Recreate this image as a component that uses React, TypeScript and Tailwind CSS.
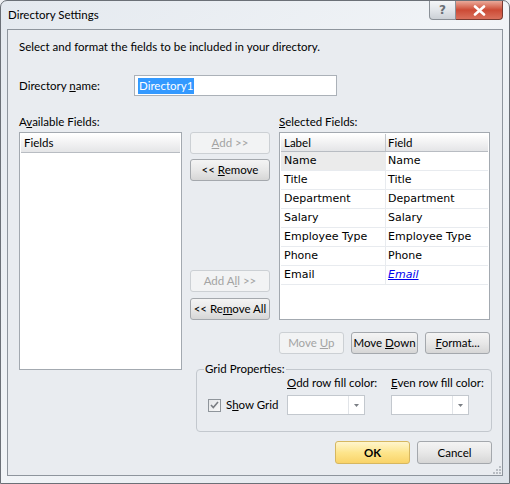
import React from "react";

const ui = { fontFamily: "Lato, 'Open Sans', sans-serif" };
const cell = { fontFamily: "'DejaVu Sans', Verdana, sans-serif" };

const Btn = ({ children, disabled, className = "" }: { children: React.ReactNode; disabled?: boolean; className?: string }) => (
  <button
    type="button"
    className={
      "h-[22px] rounded-[3px] border text-[11.5px] leading-none " +
      (disabled
        ? "border-[#ccd0d4] bg-[#f2f3f4] text-[#a3a3a3] "
        : "border-[#a4a8ad] bg-gradient-to-b from-[#f4f4f4] via-[#e8e8e8] to-[#d6d6d6] text-black ") +
      className
    }
  >
    {children}
  </button>
);

const rows = ["Name", "Title", "Department", "Salary", "Employee Type", "Phone", "Email"];

const Combo = () => (
  <div className="flex h-[20px] w-[78px] border border-[#c3c8ce] bg-white">
    <div className="flex-1" />
    <div className="flex w-[16px] items-center justify-center border-l border-[#e1e4e8]">
      <svg width="5" height="3" viewBox="0 0 5 3">
        <path d="M0 0h5L2.5 3z" fill="#7a7e84" />
      </svg>
    </div>
  </div>
);

export default function App() {
  return (
    <div className="h-[484px] w-[510px] overflow-hidden bg-[#eef0f3]" style={ui}>
      <div className="flex h-[484px] w-[510px] flex-col rounded-t-[7px] border border-[#6b7077] bg-gradient-to-br from-[#e4e9ef] via-[#f1f4f7] to-[#dde3ea]">
        {/* title bar */}
        <div className="flex h-[28px] shrink-0 items-start">
          <span className="ml-[7px] mt-[6px] text-[11.5px] leading-[16px] text-black">Directory Settings</span>
          <div className="ml-auto mr-[6px] flex">
            <div className="flex h-[19px] w-[27px] items-center justify-center rounded-bl-[4px] border border-t-0 border-[#8a9097] bg-gradient-to-b from-[#f4f6f8] via-[#e2e6ea] to-[#cbd0d6]">
              <span className="text-[12px] font-bold leading-none text-[#6a6f75]" style={{ fontFamily: "'DejaVu Sans', sans-serif" }}>?</span>
            </div>
            <div className="flex h-[19px] w-[47px] items-center justify-center rounded-br-[4px] border border-l-0 border-t-0 border-[#7a3a30] bg-gradient-to-b from-[#e9a99a] via-[#cc4a35] to-[#d9705c]">
              <svg width="13" height="11" viewBox="0 0 13 11">
                <path d="M2 1.5l9 8M11 1.5l-9 8" stroke="#fff" strokeWidth="2.6" strokeLinecap="round" />
              </svg>
            </div>
          </div>
        </div>

        {/* client area */}
        <div className="mx-[6px] mb-[7px] flex flex-1 flex-col border border-[#8e959d] bg-[#e9ecf0] pl-[11px] pr-[10px] pt-[9px] text-[11.5px] leading-[16px] text-black">
          <p>Select and format the fields to be included in your directory.</p>

          <div className="mt-[20px] flex items-center">
            <label className="w-[115px]">
              Directory <span className="underline">n</span>ame:
            </label>
            <div className="flex h-[21px] w-[203px] items-center border border-[#abb1b8] bg-white pl-[3px]">
              <span className="bg-[#3399ff] px-[1px] text-white">Directory1</span>
            </div>
          </div>

          <div className="mt-[18px] flex">
            {/* available fields */}
            <div className="w-[164px]">
              <div className="mb-[2px]">
                A<span className="underline">v</span>ailable Fields:
              </div>
              <div className="h-[238px] border border-[#a3a9b0] bg-white p-[1px]">
                <div className="flex h-[19px] items-center border-b border-[#b8bcc2] bg-gradient-to-b from-[#ffffff] via-[#f2f2f3] to-[#e4e5e7] pl-[3px]">
                  Fields
                </div>
              </div>
            </div>

            <div className="ml-[8px] flex flex-col">
              <div className="flex">
                {/* move buttons */}
                <div className="mt-[18px] flex w-[80px] flex-col">
                  <Btn disabled>
                    <span className="underline">A</span>dd &gt;&gt;
                  </Btn>
                  <Btn className="mt-[5px]">
                    &lt;&lt; <span className="underline">R</span>emove
                  </Btn>
                  <Btn disabled className="mt-[89px]">
                    Add A<span className="underline">l</span>l &gt;&gt;
                  </Btn>
                  <Btn className="mt-[6px]">
                    &lt;&lt; Re<span className="underline">m</span>ove All
                  </Btn>
                </div>

                {/* selected fields */}
                <div className="ml-[9px] flex w-[211px] flex-col">
                  <div className="mb-[2px]">
                    <span className="underline">S</span>elected Fields:
                  </div>
                  <div className="h-[188px] border border-[#a3a9b0] bg-white p-[1px]">
                    <div className="grid h-[18px] grid-cols-[105px_1fr] border-b border-[#b8bcc2] bg-gradient-to-b from-[#ffffff] via-[#f2f2f3] to-[#e4e5e7]">
                      <div className="flex items-center border-r border-[#c2c5ca] pl-[3px]">Label</div>
                      <div className="flex items-center pl-[2px]">Field</div>
                    </div>
                    {rows.map((r, i) => (
                      <div key={r} className="grid h-[19px] grid-cols-[105px_1fr] border-b border-[#e8ebef] text-[11px]" style={cell}>
                        <div className={"flex items-center border-r border-[#e8ebef] pl-[3px] " + (i === 0 ? "bg-[#ebebeb]" : "")}>{r}</div>
                        <div className="flex items-center pl-[2px]">
                          {r === "Email" ? <span className="italic text-[#0000ee] underline">Email</span> : r}
                        </div>
                      </div>
                    ))}
                  </div>
                  <div className="mt-[12px] flex gap-[7px]">
                    <Btn disabled className="w-[65px]">
                      Move <span className="underline">U</span>p
                    </Btn>
                    <Btn className="w-[68px]">
                      Move <span className="underline">D</span>own
                    </Btn>
                    <Btn className="w-[65px]">
                      <span className="underline">F</span>ormat...
                    </Btn>
                  </div>
                </div>
              </div>

              {/* grid properties */}
              <fieldset className="ml-[6px] mt-[8px] h-[70px] w-[294px] rounded-[4px] border border-[#c3c8ce] pl-[11px]">
                <legend className="ml-[-4px] px-[1px] leading-[14px]">Grid Properties:</legend>
                <div className="flex items-end">
                  <div className="mb-[2px] flex w-[79px] items-center">
                    <div className="flex h-[13px] w-[13px] items-center justify-center border border-[#8f959b] bg-gradient-to-br from-[#e4e6e8] to-[#f8f8f8]">
                      <svg width="9" height="8" viewBox="0 0 9 8">
                        <path d="M1 4l2.3 2.5L8 1" stroke="#7a7d82" strokeWidth="1.6" fill="none" />
                      </svg>
                    </div>
                    <span className="ml-[5px]">
                      S<span className="underline">h</span>ow Grid
                    </span>
                  </div>
                  <div className="flex w-[104px] flex-col">
                    <span className="mb-[5px] whitespace-nowrap leading-[14px]">
                      <span className="underline">O</span>dd row fill color:
                    </span>
                    <Combo />
                  </div>
                  <div className="flex w-[100px] flex-col">
                    <span className="mb-[5px] whitespace-nowrap leading-[14px]">
                      <span className="underline">E</span>ven row fill color:
                    </span>
                    <Combo />
                  </div>
                </div>
              </fieldset>
            </div>
          </div>

          <div className="mt-[9px] flex justify-end gap-[7px]">
            <button
              type="button"
              className="h-[23px] w-[75px] rounded-[3px] border border-[#d6b760] bg-gradient-to-b from-[#fff5cc] via-[#fde58c] to-[#f9d368] text-[11.5px] font-bold leading-none text-black"
            >
              OK
            </button>
            <Btn className="h-[23px] w-[75px]">Cancel</Btn>
          </div>
          <div className="mr-[-9px] mt-auto mb-[1px] flex justify-end">
            <svg width="9" height="9" viewBox="0 0 9 9">
              {[
                [7, 1],
                [7, 4],
                [4, 4],
                [7, 7],
                [4, 7],
                [1, 7],
              ].map(([x, y], i) => (
                <rect key={i} x={x} y={y} width="2" height="2" fill="#b8bdc3" />
              ))}
            </svg>
          </div>
        </div>
      </div>
    </div>
  );
}
